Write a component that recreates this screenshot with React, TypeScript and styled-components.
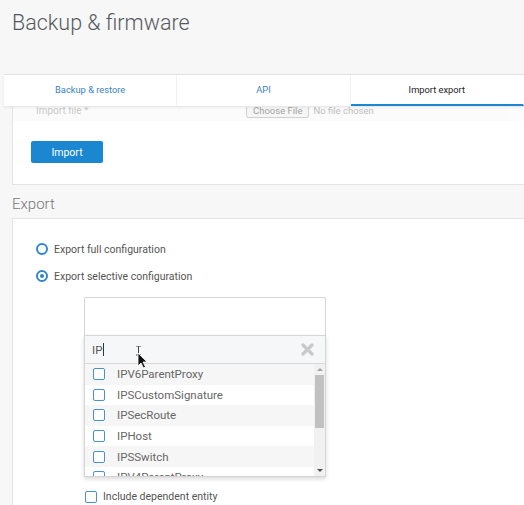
import React from "react";
import styled, { createGlobalStyle } from "styled-components";

const GlobalStyle = createGlobalStyle`
  html, body {
    margin: 0;
    padding: 0;
    background: #f7f7f7;
    font-family: Roboto, "Liberation Sans", Arial, sans-serif;
    overflow: hidden;
  }
`;

const SPage = styled.div`
  width: 524px;
  height: 505px;
  overflow: hidden;
  position: relative;
`;

const STitle = styled.h1`
  margin: 0;
  padding: 10px 0 0 12px;
  height: 74px;
  box-sizing: border-box;
  font-size: 21.5px;
  font-weight: 300;
  color: #555a5f;
  line-height: 26px;
`;

const STabs = styled.ul`
  position: relative;
  z-index: 2;
  display: flex;
  margin: 0 0 0 4px;
  padding: 0;
  list-style: none;
  height: 31px;
  background: #fff;
  border-top: 1px solid #e2e2e2;
  border-bottom: 1px solid #e8e8e8;
  box-shadow: 0 1px 3px rgba(0, 0, 0, 0.06);
`;

const STab = styled.li<{ $active?: boolean }>`
  flex: 1;
  display: flex;
  align-items: center;
  justify-content: center;
  font-size: 9.3px;
  color: ${(p) => (p.$active ? "#222" : "#3a7fc6")};
  border-right: 1px solid ${(p) => (p.$active ? "transparent" : "#f0f0f0")};
  border-bottom: 2px solid ${(p) => (p.$active ? "#1a87d0" : "transparent")};
  box-sizing: border-box;
`;

const SPanel = styled.section`
  margin-left: 12px;
  background: #fff;
  border: 1px solid #e4e4e4;
  border-right: none;
`;

const SImportPanel = styled(SPanel)`
  margin-top: -9px;
  padding-bottom: 21px;
`;

const SImportRow = styled.div`
  display: flex;
  align-items: center;
  height: 22px;
  background: #f9f9f9;
  opacity: 0.55;
  font-size: 9.5px;
  color: #888;
`;

const SFileLabel = styled.span`
  width: 210px;
  padding-left: 23px;
  font-size: 10px;
  color: #999;
`;

const SChooseBtn = styled.span`
  display: inline-block;
  padding: 1px 6px;
  border: 1px solid #aaa;
  border-radius: 2px;
  background: #efefef;
  color: #555;
  margin-right: 4px;
`;

const SImportBtn = styled.button`
  display: block;
  margin: 20px 0 0 18px;
  width: 72px;
  height: 22px;
  border: none;
  border-radius: 2px;
  background: #1a87d0;
  color: #fff;
  font-family: inherit;
  font-size: 10.5px;
`;

const SHeading = styled.h2`
  margin: 0;
  padding: 10px 0 0 12px;
  height: 33px;
  box-sizing: border-box;
  font-size: 15px;
  font-weight: 300;
  color: #777;
  line-height: 18px;
`;

const SExportPanel = styled(SPanel)`
  padding: 24px 0 40px 23px;
  height: 300px;
`;

const SRadioRow = styled.label`
  display: flex;
  align-items: center;
  gap: 6px;
  height: 12px;
  margin-bottom: 15px;
  font-size: 10.5px;
  color: #555;
`;

const SRadio = styled.span<{ $checked?: boolean }>`
  width: 12px;
  height: 12px;
  box-sizing: border-box;
  border-radius: 50%;
  border: 2px solid #2f86c9;
  display: flex;
  align-items: center;
  justify-content: center;

  &::after {
    content: "";
    display: ${(p) => (p.$checked ? "block" : "none")};
    width: 4px;
    height: 4px;
    border-radius: 50%;
    background: #2f86c9;
  }
`;

const SSelectWrap = styled.div`
  position: relative;
  margin: 12px 0 0 48px;
  width: 242px;
`;

const SSelectBox = styled.div`
  height: 38px;
  box-sizing: border-box;
  border: 1px solid #d5d5d5;
  border-bottom: none;
  border-radius: 2px 2px 0 0;
  background: #fff;
`;

const SDropdown = styled.div`
  position: relative;
  z-index: 1;
  height: 142px;
  box-sizing: border-box;
  border: 1px solid #d5d5d5;
  background: #fff;
  box-shadow: 0 2px 4px rgba(0, 0, 0, 0.15);
  display: flex;
  flex-direction: column;
`;

const SSearch = styled.div`
  height: 27px;
  flex-shrink: 0;
  display: flex;
  align-items: center;
  padding: 0 11px 0 7px;
  background: #f6f7f9;
  border-bottom: 1px solid #d8d8d8;
  font-size: 11.5px;
  color: #555;
  position: relative;
`;

const SCaret = styled.span`
  display: inline-block;
  width: 1px;
  height: 13px;
  background: #333;
  margin-left: 1px;
`;

const SClear = styled.svg`
  margin-left: auto;
`;

const SListArea = styled.div`
  flex: 1;
  display: flex;
  overflow: hidden;
`;

const SList = styled.ul`
  flex: 1;
  margin: 0;
  padding: 0;
  list-style: none;
`;

const SItem = styled.li<{ $odd?: boolean }>`
  height: 20.6px;
  display: flex;
  align-items: center;
  padding-left: 8px;
  gap: 12px;
  background: ${(p) => (p.$odd ? "#f6f6f6" : "#fff")};
  font-size: 11.5px;
  color: #666;
`;

const SCheck = styled.span`
  width: 12px;
  height: 12px;
  box-sizing: border-box;
  border: 1.5px solid #4a90cf;
  border-radius: 2px;
  background: #fff;
  flex-shrink: 0;
`;

const SScrollbar = styled.div`
  width: 11px;
  background: #f1f1f1;
  display: flex;
  flex-direction: column;
  align-items: center;
`;

const SArrow = styled.div<{ $down?: boolean }>`
  height: 11px;
  display: flex;
  align-items: center;
  justify-content: center;

  &::after {
    content: "";
    border-left: 3px solid transparent;
    border-right: 3px solid transparent;
    ${(p) =>
      p.$down ? "border-top: 3px solid #505050;" : "border-bottom: 3px solid #a3a3a3;"}
  }
`;

const SThumb = styled.div`
  width: 9px;
  height: 53px;
  background: #c1c1c1;
`;

const STrack = styled.div`
  flex: 1;
`;

const SPointer = styled.svg`
  position: absolute;
  left: 50px;
  top: 10px;
  pointer-events: none;
`;

const SInclude = styled.label`
  display: flex;
  align-items: center;
  gap: 6px;
  margin: 13px 0 0 49px;
  font-size: 10.5px;
  color: #555;
`;

const items = [
  "IPV6ParentProxy",
  "IPSCustomSignature",
  "IPSecRoute",
  "IPHost",
  "IPSSwitch",
  "IPV4ParentProxy",
];

export default function App() {
  return (
    <SPage>
      <GlobalStyle />
      <STitle>Backup &amp; firmware</STitle>
      <STabs>
        <STab>Backup &amp; restore</STab>
        <STab>API</STab>
        <STab $active>Import export</STab>
      </STabs>

      <SImportPanel>
        <SImportRow>
          <SFileLabel>Import file *</SFileLabel>
          <SChooseBtn>Choose File</SChooseBtn>
          <span>No file chosen</span>
        </SImportRow>
        <SImportBtn type="button">Import</SImportBtn>
      </SImportPanel>

      <SHeading>Export</SHeading>
      <SExportPanel>
        <SRadioRow>
          <SRadio />
          Export full configuration
        </SRadioRow>
        <SRadioRow>
          <SRadio $checked />
          Export selective configuration
        </SRadioRow>

        <SSelectWrap>
          <SSelectBox />
          <SDropdown>
            <SSearch>
              IP
              <SCaret />
              <SPointer width="14" height="24" viewBox="0 0 14 24">
                <path d="M1 0h5M1 9h5M3.5 0v9" stroke="#444" strokeWidth="1" fill="none" />
                <path
                  d="M3 7 L3 20 L6 17 L8.5 22 L10.5 21 L8 16 L12 16 Z"
                  fill="#111"
                  stroke="#fff"
                  strokeWidth="0.8"
                />
              </SPointer>
              <SClear width="13" height="13" viewBox="0 0 13 13">
                <path
                  d="M2 2 L11 11 M11 2 L2 11"
                  stroke="#c9c9c9"
                  strokeWidth="3.2"
                  strokeLinecap="round"
                />
              </SClear>
            </SSearch>
            <SListArea>
              <SList>
                {items.map((name, i) => (
                  <SItem key={name} $odd={i % 2 === 0}>
                    <SCheck />
                    {name}
                  </SItem>
                ))}
              </SList>
              <SScrollbar>
                <SArrow />
                <SThumb />
                <STrack />
                <SArrow $down />
              </SScrollbar>
            </SListArea>
          </SDropdown>
        </SSelectWrap>

        <SInclude>
          <SCheck />
          Include dependent entity
        </SInclude>
      </SExportPanel>
    </SPage>
  );
}
